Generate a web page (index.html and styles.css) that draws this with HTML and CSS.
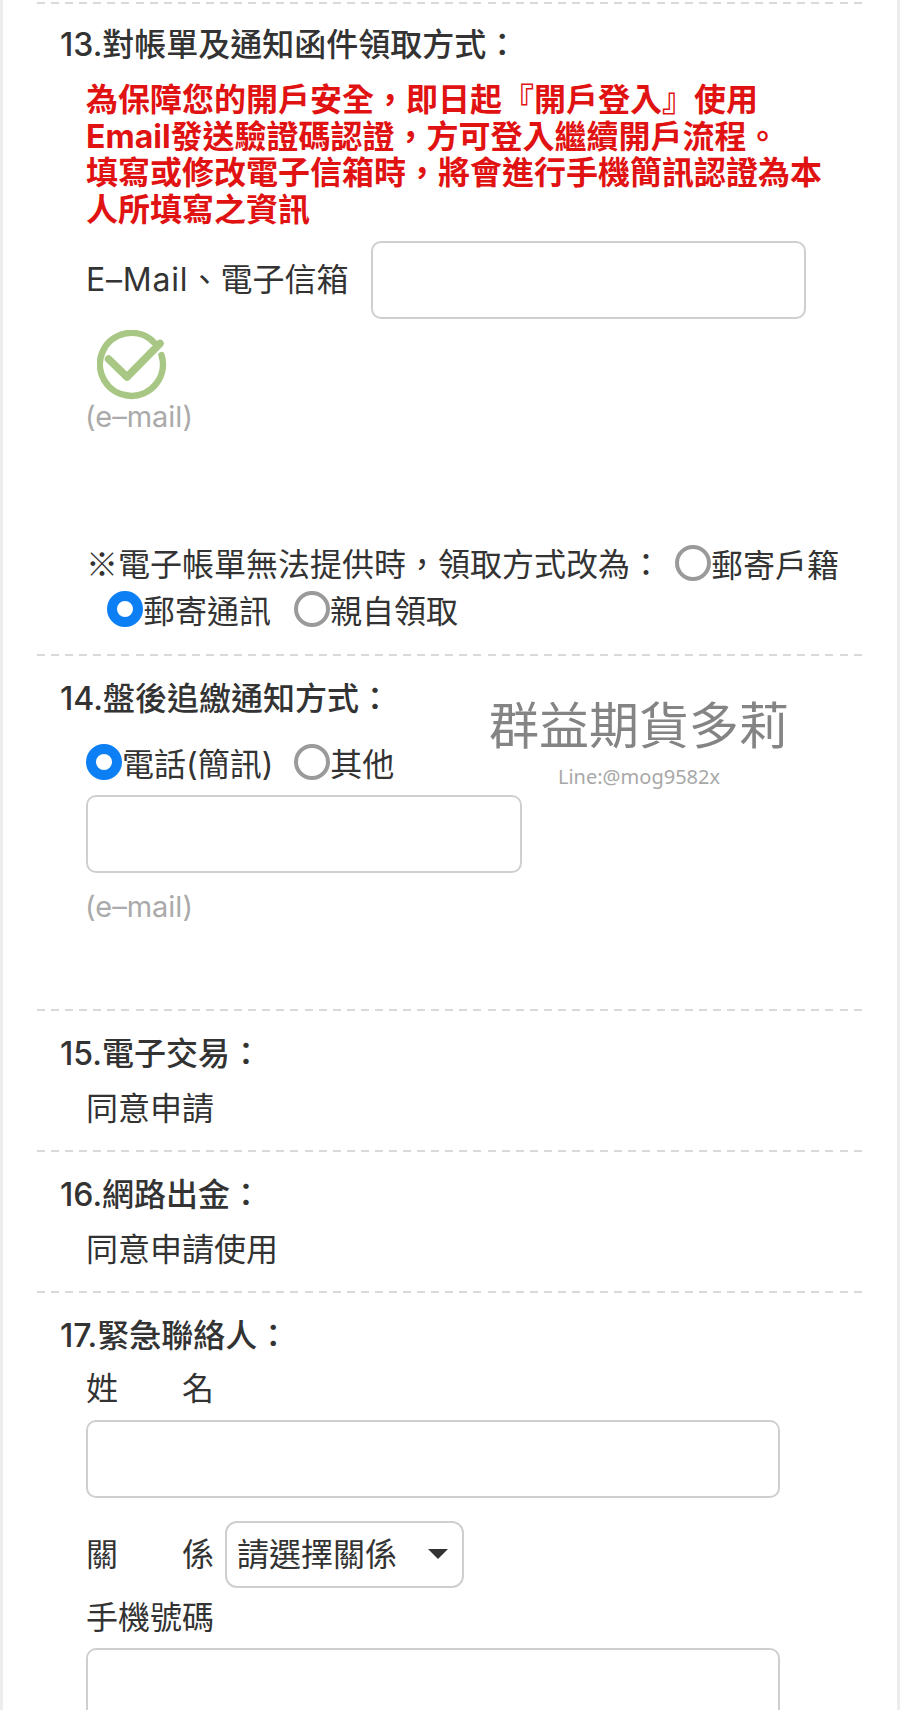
FILE: index.html
```html
<!DOCTYPE html>
<html lang="zh-Hant">
<head>
<meta charset="utf-8">
<title>開戶資料</title>
<link rel="stylesheet" href="styles.css">
</head>
<body>
<main class="page">
  <div class="divider divider-first"></div>

  <section class="section section-first">
    <h2 class="title">13.對帳單及通知函件領取方式：</h2>
    <div class="body">
      <p class="warning">為保障您的開戶安全，即日起『開戶登入』使用Email發送驗證碼認證，方可登入繼續開戶流程。<br>填寫或修改電子信箱時，將會進行手機簡訊認證為本人所填寫之資訊</p>
      <div class="email-row">
        <label class="text"><span class="latin">E–Mail</span>、電子信箱</label>
        <input class="field field-email" type="text">
      </div>
      <svg class="check" width="70" height="70" viewBox="0 0 70 70" fill="none" stroke="#a8c784">
        <path d="M56.8 12.2A31.5 31.5 0 1 0 64.5 25" stroke-width="6.5" stroke-linecap="round"/>
        <path d="M11.5 29L30 47L63 13.500" stroke-width="7.5" stroke-linecap="round" stroke-linejoin="round"/>
      </svg>
      <div class="hint">(e–mail)</div>
      <div class="radio-row note-one">
        <span class="text"><span class="cjk">※</span>電子帳單無法提供時，領取方式改為：</span>
        <label class="option option-first"><input class="radio" type="radio" name="fallback">郵寄戶籍</label>
      </div>
      <div class="radio-row note-two">
        <label class="option"><input class="radio" type="radio" name="fallback" checked>郵寄通訊</label>
        <label class="option"><input class="radio" type="radio" name="fallback">親自領取</label>
      </div>
    </div>
  </section>

  <div class="divider divider-13"></div>

  <section class="section">
    <h2 class="title">14.盤後追繳通知方式：</h2>
    <div class="body">
      <div class="radio-row notify">
        <label class="option"><input class="radio" type="radio" name="notify" checked>電話(簡訊)</label>
        <label class="option"><input class="radio" type="radio" name="notify">其他</label>
      </div>
      <input class="field field-short" type="text">
      <div class="hint hint-second">(e–mail)</div>
    </div>
  </section>

  <div class="divider divider-14"></div>

  <section class="section">
    <h2 class="title">15.電子交易：</h2>
    <div class="body"><p class="value">同意申請</p></div>
  </section>

  <div class="divider divider-plain"></div>

  <section class="section">
    <h2 class="title">16.網路出金：</h2>
    <div class="body"><p class="value">同意申請使用</p></div>
  </section>

  <div class="divider divider-plain"></div>

  <section class="section">
    <h2 class="title">17.緊急聯絡人：</h2>
    <div class="body">
      <div class="text caption">姓　　名</div>
      <input class="field field-wide" type="text">
      <div class="relation-row">
        <label class="text relation-label">關　　係</label>
        <div class="select-wrap">
          <select class="select"><option>請選擇關係</option></select>
        </div>
      </div>
      <div class="text caption-phone">手機號碼</div>
      <input class="field field-wide field-phone" type="text">
    </div>
  </section>

  <div class="watermark">
    <div class="watermark-name">群益期貨多莉</div>
    <div class="watermark-line">Line:@mog9582x</div>
  </div>
</main>
</body>
</html>
```
FILE: styles.css
```css
* { box-sizing: border-box; }

html, body {
  margin: 0;
  padding: 0;
  background: #fff;
}

body {
  font-family: Inter, "Noto Sans CJK TC", sans-serif;
  font-size: 32px;
  color: #333;
  overflow: hidden;
}

.cjk { font-family: "Noto Sans CJK TC", sans-serif; }
.latin { letter-spacing: 0.8px; }

.page {
  position: relative;
  width: 900px;
  height: 1710px;
  overflow: hidden;
  padding: 0 34px;
  border-left: 3px solid #ededed;
  border-right: 3px solid #ededed;
}

.divider {
  height: 2px;
  background: repeating-linear-gradient(to right, #d9d9d9 0 8px, transparent 8px 14.08px);
}
.divider-first { margin-top: 2px; }
.divider-13 { margin-top: 22px; }
.divider-14 { margin-top: 85px; }
.divider-plain { margin-top: 22px; }

.section { padding-top: 24px; }
.section-first { padding-top: 22px; }

.title {
  margin: 0;
  padding-left: 23px;
  font-size: 32px;
  line-height: 38px;
  font-weight: 500;
  color: #333;
}

.body { padding-left: 49px; }

.text { line-height: 38px; }

.warning {
  margin: 18px 0 0;
  width: 745px;
  font-weight: 700;
  line-height: 36.5px;
  color: #e01212;
}

.email-row {
  display: flex;
  align-items: center;
  justify-content: space-between;
  width: 720px;
  margin-top: 13px;
}

.field {
  display: block;
  height: 78px;
  padding: 0 12px;
  background: #fff;
  border: 2px solid #cfcfcf;
  border-radius: 10px;
  outline: none;
  font: inherit;
}
.field-email { width: 435px; }
.field-short { width: 436px; margin-top: 10px; }
.field-wide { width: 694px; margin-top: 12px; }
.field-phone { margin-top: 11px; }

.check {
  display: block;
  margin: 11px 0 0 11px;
}

.hint {
  margin-left: -1px;
  font-size: 29px;
  line-height: 34px;
  color: #aaa;
}
.hint-second { margin-top: 17px; }

.radio-row {
  display: flex;
  align-items: center;
  height: 46px;
}
.note-one { margin-top: 106px; }
.note-two { padding-left: 21px; gap: 23px; }
.notify { margin-top: 21px; gap: 21px; }

.option {
  display: inline-flex;
  align-items: center;
}
.option-first { margin-left: 13px; }

.radio {
  appearance: none;
  -webkit-appearance: none;
  flex: none;
  width: 36px;
  height: 36px;
  margin: 0;
  background: #fff;
  border: 4px solid #9a9a9a;
  border-radius: 50%;
}
.radio:checked {
  border: 10px solid #0d7ff5;
}

.value {
  margin: 17px 0 0;
  line-height: 38px;
}

.caption {
  margin-top: 15px;
}

.relation-row {
  display: flex;
  align-items: center;
  gap: 11px;
  margin-top: 23px;
}

.select-wrap {
  position: relative;
  width: 239px;
  height: 67px;
}
.select-wrap::after {
  content: "";
  position: absolute;
  left: 203px;
  top: 28px;
  border-top: 10px solid #333;
  border-left: 10px solid transparent;
  border-right: 10px solid transparent;
  pointer-events: none;
}

.select {
  appearance: none;
  -webkit-appearance: none;
  display: block;
  width: 100%;
  height: 100%;
  padding: 0 0 0 10px;
  background: #fff;
  border: 2px solid #cfcfcf;
  border-radius: 12px;
  outline: none;
  font: inherit;
  color: #333;
}

.caption-phone { margin-top: 11px; }

.watermark {
  position: absolute;
  left: 486px;
  top: 692px;
  width: 300px;
  text-align: center;
  pointer-events: none;
}
.watermark-name {
  font-size: 50px;
  line-height: 68px;
  color: #848484;
  white-space: nowrap;
}
.watermark-line {
  margin-top: 3px;
  font-family: "Noto Sans", sans-serif;
  font-size: 20px;
  line-height: 28px;
  color: #a8a8a8;
}
```
